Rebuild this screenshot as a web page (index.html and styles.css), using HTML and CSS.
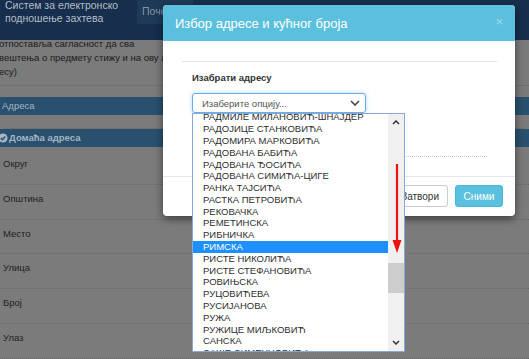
FILE: index.html
```html
<!DOCTYPE html>
<html>
<head>
    <title>Избор адресе и кућног броја</title>
    <link rel="stylesheet" href="styles.css">
</head>
<body>
    <div class="topbar">
        <div class="brand">Систем за електронско<br>подношење захтева</div>
        <div class="nav-tab">Почетна</div>
    </div>

    <div class="intro">
        <p>отпоставља сагласност да сва</p>
        <p>вештења о предмету стижу и на ову адресу</p>
        <p>есу)</p>
    </div>

    <div class="bar">Адреса</div>
    <div class="bar bar-sub">
        <svg class="check" viewBox="0 0 10 10" width="10" height="10">
            <circle cx="5" cy="5" r="4.6" fill="#a9b7c5"/>
            <polyline points="2.8,5.1 4.4,6.6 7.3,3.6" fill="none" stroke="#2a5272" stroke-width="1.5"/>
        </svg>
        Домаћа адреса
    </div>

    <div class="rows">
        <div class="row">Округ</div>
        <div class="row">Општина</div>
        <div class="row">Место</div>
        <div class="row">Улица</div>
        <div class="row">Број</div>
        <div class="row">Улаз</div>
    </div>

    <div class="modal">
        <div class="modal-header">
            <span class="modal-title">Избор адресе и кућног броја</span>
            <span class="close">×</span>
        </div>
        <div class="modal-body">
            <div class="rule"></div>
            <div class="form-group">
                <label class="label">Изабрати адресу</label>
                <div class="select">
                    <span>Изаберите опцију...</span>
                    <svg viewBox="0 0 10 6" width="10" height="6">
                        <polyline points="1,1 5,5 9,1" fill="none" stroke="#444" stroke-width="1.6"/>
                    </svg>
                </div>
                <div class="dotted"></div>
            </div>
        </div>
        <div class="modal-footer">
            <button class="btn">Затвори</button>
            <button class="btn btn-info">Сними</button>
        </div>

        <!-- open list of the select -->
        <div class="dropdown">
            <div class="options">
                <div class="options-inner">
                    <div>РАДМИЛЕ МИЛАНОВИЋ-ШНАЈДЕР</div>
                    <div>РАДОЈИЦЕ СТАНКОВИЋА</div>
                    <div>РАДОМИРА МАРКОВИЋА</div>
                    <div>РАДОВАНА БАБИЋА</div>
                    <div>РАДОВАНА ЂОСИЋА</div>
                    <div>РАДОВАНА СИМИЋА-ЦИГЕ</div>
                    <div>РАНКА ТАЈСИЋА</div>
                    <div>РАСТКА ПЕТРОВИЋА</div>
                    <div>РЕКОВАЧКА</div>
                    <div>РЕМЕТИНСКА</div>
                    <div>РИБНИЧКА</div>
                    <div class="selected">РИМСКА</div>
                    <div>РИСТЕ НИКОЛИЋА</div>
                    <div>РИСТЕ СТЕФАНОВИЋА</div>
                    <div>РОВИЊСКА</div>
                    <div>РУЦОВИЋЕВА</div>
                    <div>РУСИЈАНОВА</div>
                    <div>РУЖА</div>
                    <div>РУЖИЦЕ МИЉКОВИЋ</div>
                    <div>САНСКА</div>
                    <div>САШЕ СИМЕУНОВИЋА</div>
                </div>
            </div>
            <div class="scrollbar">
                <div class="scroll-btn">
                    <svg viewBox="0 0 8 5" width="8" height="5">
                        <polyline points="1,4 4,1 7,4" fill="none" stroke="#333" stroke-width="1.5"/>
                    </svg>
                </div>
                <div class="track"><div class="thumb"></div></div>
                <div class="scroll-btn">
                    <svg viewBox="0 0 8 5" width="8" height="5">
                        <polyline points="1,1 4,4 7,1" fill="none" stroke="#333" stroke-width="1.5"/>
                    </svg>
                </div>
            </div>
        </div>
    </div>

    <!-- annotation -->
    <svg class="arrow" viewBox="0 0 14 96" width="14" height="96">
        <line x1="7" y1="4" x2="7" y2="84" stroke="#ee1111" stroke-width="2.2"/>
        <polygon points="2.5,80 11.5,80 7,93" fill="#ee1111"/>
    </svg>
</body>
</html>
```

FILE: styles.css
```css
body {
    margin: 0;
    width: 529px;
    height: 359px;
    overflow: hidden;
    position: relative;
    background: #7b7b7b;
    color: #222;
    font-family: "Liberation Sans", Arial, sans-serif;
}
.topbar {
    height: 40px;
    background: #172e4c;
    display: flex;
    align-items: flex-start;
}
.brand {
    color: #b4bdc9;
    font-size: 10.5px;
    line-height: 12.5px;
    margin: -1px 0 0 5px;
    width: 132px;
}
.nav-tab {
    background: #1f3959;
    color: #8794a5;
    font-size: 10.5px;
    height: 24px;
    line-height: 22px;
    padding: 0 10px 0 5px;
}
.intro {
    margin: -3px 0 0 -1px;
    font-size: 9.5px;
    line-height: 14px;
    color: #1a1a1a;
    white-space: nowrap;
    padding-bottom: 6px;
    border-bottom: 1px solid #707070;
}
.intro p {
    margin: 0;
}
.bar {
    height: 18px;
    line-height: 18px;
    margin-top: 11px;
    background: #29516f;
    color: #a6b4c2;
    font-size: 9.5px;
    padding-left: 2px;
    display: flex;
    align-items: center;
}
.bar-sub {
    margin-top: 14px;
    font-weight: bold;
    padding-left: 0;
    gap: 1px;
    box-shadow: 0 -5px 0 -4px #707070;
}
.check {
    margin-left: -2px;
}
.rows {
    margin-top: 3px;
}
.row {
    height: 34.8px;
    box-sizing: border-box;
    padding: 8px 0 0 3px;
    line-height: 12px;
    font-size: 9.5px;
    color: #222;
    border-bottom: 1px dotted #686868;
}

/* modal */
.modal {
    position: absolute;
    left: 163px;
    top: 5px;
    width: 352px;
    background: #fff;
    border-radius: 4px;
    box-shadow: 0 3px 9px rgba(0, 0, 0, 0.5);
}
.modal-header {
    height: 36px;
    background: #5bc0de;
    border-radius: 4px 4px 0 0;
    display: flex;
    align-items: center;
    justify-content: space-between;
    padding: 0 12px;
}
.modal-title {
    color: #fff;
    font-size: 13px;
}
.close {
    color: #a5d9ea;
    font-size: 13px;
    margin-top: -4px;
}
.modal-body {
    height: 135px;
    box-sizing: border-box;
    padding: 20px 18px 0 19px;
}
.rule {
    border-top: 1px solid #e5e5e5;
}
.form-group {
    padding: 0 10px;
}
.label {
    display: block;
    font-size: 9.5px;
    font-weight: bold;
    color: #333;
    margin-top: 10px;
    line-height: 12px;
}
.select {
    margin-top: 9px;
    width: 174px;
    height: 20px;
    box-sizing: border-box;
    border: 1px solid #66afe9;
    border-radius: 3px;
    box-shadow: 0 0 4px rgba(102, 175, 233, 0.5);
    display: flex;
    align-items: center;
    justify-content: space-between;
    padding: 0 5px 0 9px;
    font-size: 9.5px;
    color: #555;
}
.dotted {
    margin-top: 43px;
    border-top: 1px dotted #c8c8c8;
}
.modal-footer {
    border-top: 1px solid #e5e5e5;
    padding: 8px 12px 9px;
    display: flex;
    justify-content: flex-end;
    gap: 7px;
}
.btn {
    height: 22px;
    padding: 0 8px 0 14px;
    border: 1px solid #ccc;
    border-radius: 3px;
    background: #fff;
    color: #333;
    font-family: "Liberation Sans", Arial, sans-serif;
    font-size: 10px;
}
.btn-info {
    width: 48px;
    padding: 0;
    background: #5bc0de;
    border-color: #46b8da;
    color: #fff;
}

/* open select list */
.dropdown {
    position: absolute;
    left: 29px;
    top: 108px;
    width: 213px;
    height: 239px;
    box-sizing: border-box;
    border: 1px solid #86a9d6;
    background: #fff;
    display: flex;
}
.options {
    flex: 1;
    overflow: hidden;
}
.options-inner {
    margin-top: -2.7px;
    font-size: 9.5px;
    line-height: 11.8px;
    color: #2e2e2e;
    white-space: nowrap;
}
.options-inner div {
    padding-left: 10px;
}
.options-inner .selected {
    background: #1e8fff;
    color: #fff;
}
.scrollbar {
    width: 16px;
    background: #f0f0f0;
    display: flex;
    flex-direction: column;
}
.scroll-btn {
    height: 17px;
    display: flex;
    align-items: center;
    justify-content: center;
}
.track {
    flex: 1;
}
.thumb {
    margin-top: 132px;
    height: 30px;
    background: #cdcdcd;
}
.arrow {
    position: absolute;
    left: 390px;
    top: 160px;
}
```
